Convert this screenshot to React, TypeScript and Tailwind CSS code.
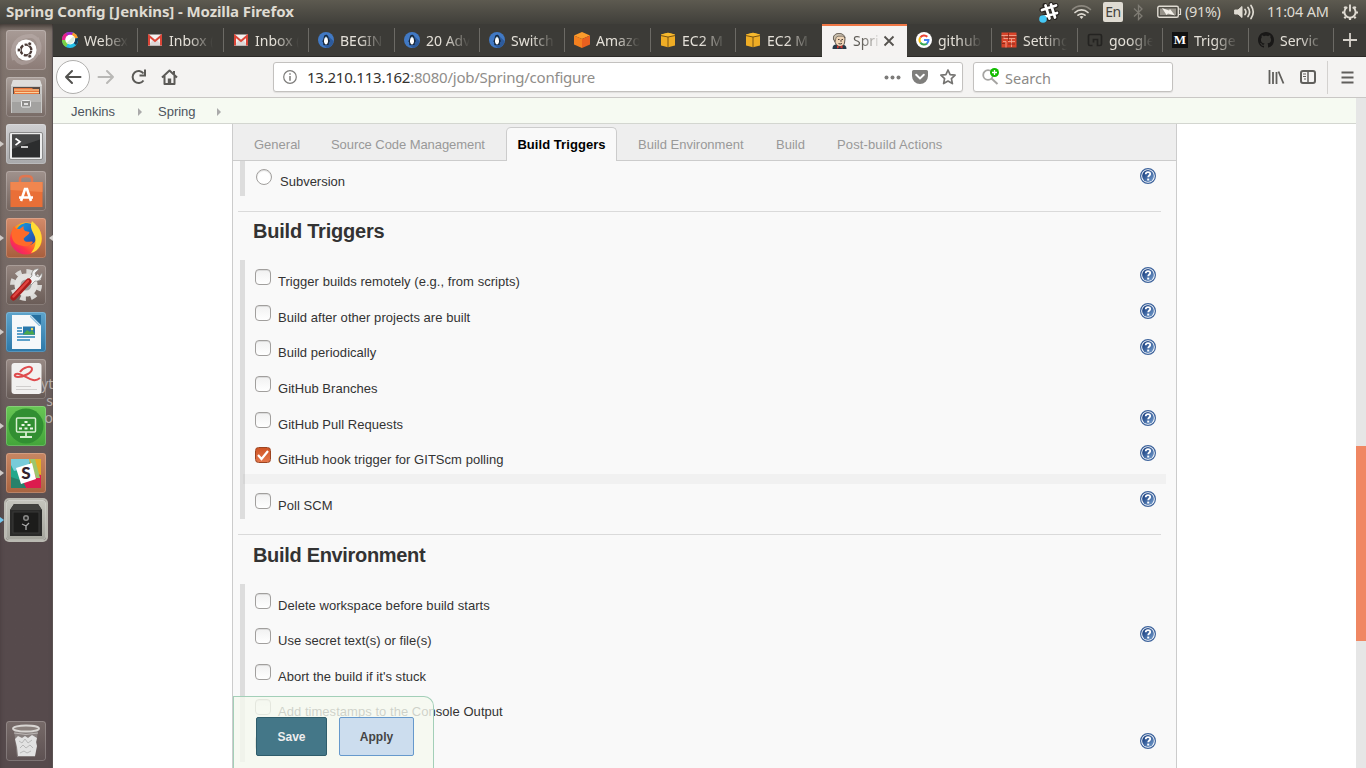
import type { ReactNode } from "react";

const ui = "font-['Noto_Sans','Open_Sans',sans-serif]";

/* ---------- Favicons ---------- */

const WebexIcon = () => (
  <svg width="16" height="16" viewBox="0 0 16 16">
    <circle cx="8" cy="8" r="8" fill="#23c0e8" />
    <path d="M8 8 0 9A8 8 0 0 1 5 .6Z" fill="#e91e8c" />
    <path d="M8 8 4 1A8 8 0 0 1 13 2Z" fill="#a829c8" />
    <path d="M8 8 11 .6A8 8 0 0 1 15.8 6Z" fill="#ff9c27" />
    <path d="M8 8 15.8 6A8 8 0 0 1 14 13Z" fill="#123c5c" />
    <path d="M8 8 0 8A8 8 0 0 0 4 15Z" fill="#7bd043" />
    <circle cx="8.2" cy="7.6" r="4.9" fill="#fff" />
    <path d="M4.500 11 11.500 4.200A5 5 0 0 1 4.500 11Z" fill="#dbeedd" />
  </svg>
);

const GmailIcon = () => (
  <svg width="16" height="16" viewBox="0 0 16 16">
    <rect x="1" y="2.500" width="14" height="11" fill="#f4f1f0" />
    <path d="M1 13.500 6 8l2 1.500L10 8l5 5.500Z" fill="#ddd8d8" />
    <path d="M2 13.500V4L8 9l6-5v9.500" fill="none" stroke="#db4537" strokeWidth="2" />
  </svg>
);

const PenguinIcon = () => (
  <svg width="16" height="16" viewBox="0 0 16 16">
    <circle cx="8" cy="8" r="8" fill="#4179c4" />
    <path d="M10 4 15.500 9A8 8 0 0 1 9 16l-4-3Z" fill="#2d5b9c" />
    <path d="M8 2.800C5.500 2.800 6 6 5.200 7.500 4 9.500 4.500 10 5 10l.5 3h5l.5-3c1 0 1-1 .2-2.500C10 5.500 10.500 2.800 8 2.800Z" fill="#17273b" />
    <path d="M8 5c-1.700 0-2 3-2 4.500S7 12.500 8 12.500 10 11 10 9.500 9.700 5 8 5Z" fill="#fff" />
    <path d="M7 4.800h2L8 6.500Z" fill="#91c1dc" />
  </svg>
);

const AmazonIcon = () => (
  <svg width="16" height="16" viewBox="0 0 16 16">
    <path d="M8 0 16 3.500 8 7 0 3.500Z" fill="#fb9b2b" />
    <path d="M0 3.500 8 7v9L0 12.500Z" fill="#f4801f" />
    <path d="M16 3.500 8 7v9l8-3.500Z" fill="#e9601f" />
  </svg>
);

const Ec2Icon = () => (
  <svg width="16" height="16" viewBox="0 0 16 16">
    <path d="M1 2.500 8 .8l7 1.700v11L8 15.200 1 13.500Z" fill="#efad25" />
    <path d="M1 2.500 8 .8l7 1.700L8 5Z" fill="#f7b92d" />
    <path d="M1 3.600 8 5l7-1.400M8 5v10.200" stroke="#6b4a12" strokeWidth=".9" fill="none" />
  </svg>
);

const JenkinsIcon = () => (
  <svg width="16" height="16" viewBox="0 0 16 16">
    <path d="M1.500 16c0-3 1-4 3-4.500h7c2.500.5 4 1.500 4 4.500Z" fill="#263a49" />
    <path d="M2.500 6C2 2.500 4.500.7 8 .7s6 2 6 5.300l-.5 4c-.5 2.500-2.500 3.500-4.500 3.500S5 12 4.200 9.500Z" fill="#eed4b6" stroke="#3c3430" strokeWidth=".8" />
    <path d="M2.500 6C2 3 4 .7 7.500.5 11 .3 14 2.300 14 5l-2-1.800H7L5 4.500l-.7 4Z" fill="#c9bfae" stroke="#4b443c" strokeWidth=".6" />
    <path d="M7 6.500h1.500M10.500 6.500H12M7.500 10.500q1.500 1 3.500 0M10 7v1.800" stroke="#352d29" strokeWidth=".9" fill="none" />
    <path d="m8.500 14 3-1.800v3.600ZM8.500 14 6 12.200v3.600Z" fill="#d33833" />
  </svg>
);

const GoogleIcon = () => (
  <svg width="16" height="16" viewBox="0 0 16 16">
    <circle cx="8" cy="8" r="8" fill="#fff" />
    <g fill="none" strokeWidth="2">
      <path d="M4.300 5.500A4.500 4.500 0 0 1 11.300 4.700" stroke="#ea4335" />
      <path d="M4.300 10.500a4.500 4.500 0 0 1 0-5" stroke="#fbbc05" />
      <path d="M4.300 10.500a4.500 4.500 0 0 0 6.700 1" stroke="#34a853" />
      <path d="M8 8h4.500a4.500 4.500 0 0 1-1.700 3.600" stroke="#4285f4" />
    </g>
  </svg>
);

const SettingIcon = () => (
  <svg width="16" height="16" viewBox="0 0 16 16">
    <rect x=".5" y=".5" width="15" height="15" fill="#d9442a" />
    <path d="M.5 3.500h15M3 6.500h11M3 4v3M2 9.500h3v6M7 9.500h7M10.500 7v8" stroke="#f5b09c" strokeWidth=".8" fill="none" />
    <path d="M1 5h14M1 11.500h3M7 12h7M7.500 1v8" stroke="#7d2418" strokeWidth=".8" fill="none" />
  </svg>
);

const DarkGIcon = () => (
  <svg width="16" height="16" viewBox="0 0 16 16">
    <path d="M5.500 13.500H3a1.500 1.500 0 0 1-1.500-1.500V4A1.500 1.500 0 0 1 3 2.500h10A1.500 1.500 0 0 1 14.500 4v8a1.500 1.500 0 0 1-1.500 1.500h-2.500V7.500H6.500v3" fill="none" stroke="#242321" strokeWidth="1.700" />
  </svg>
);

const MediumIcon = () => (
  <span className="flex h-4 w-4 items-center justify-center bg-[#111] font-['Liberation_Serif',serif] text-[13px] leading-4 font-bold text-white">
    M
  </span>
);

const GithubIcon = () => (
  <svg width="16" height="16" viewBox="0 0 16 16" fill="#191817">
    <path d="M8 0C3.580 0 0 3.580 0 8c0 3.540 2.290 6.530 5.470 7.590.4.070.55-.17.55-.38 0-.19-.01-.82-.01-1.490-2.010.37-2.530-.49-2.690-.94-.09-.23-.48-.94-.82-1.130-.28-.15-.68-.52-.01-.53.63-.01 1.080.58 1.230.82.72 1.210 1.870.87 2.330.66.07-.52.28-.87.51-1.070-1.780-.2-3.640-.89-3.640-3.950 0-.87.31-1.590.82-2.150-.08-.2-.36-1.020.08-2.120 0 0 .67-.21 2.200.82.64-.18 1.320-.27 2-.27s1.360.09 2 .27c1.530-1.040 2.200-.82 2.200-.82.44 1.100.16 1.920.08 2.120.51.56.82 1.270.82 2.150 0 3.070-1.870 3.750-3.650 3.950.29.25.54.73.54 1.480 0 1.070-.01 1.930-.01 2.200 0 .21.15.46.55.38A8.010 8.010 0 0 0 16 8c0-4.420-3.580-8-8-8Z" />
  </svg>
);

type Tab = { label: string; icon: ReactNode; active?: boolean; width: string };

const tabs: Tab[] = [
  { label: "Webex", icon: <WebexIcon />, width: "w-[85px]" },
  { label: "Inbox (", icon: <GmailIcon />, width: "w-[86px]" },
  { label: "Inbox (", icon: <GmailIcon />, width: "w-[85px]" },
  { label: "BEGIN", icon: <PenguinIcon />, width: "w-[86px]" },
  { label: "20 Adv", icon: <PenguinIcon />, width: "w-[85px]" },
  { label: "Switch", icon: <PenguinIcon />, width: "w-[85px]" },
  { label: "Amazo", icon: <AmazonIcon />, width: "w-[86px]" },
  { label: "EC2 M", icon: <Ec2Icon />, width: "w-[85px]" },
  { label: "EC2 M", icon: <Ec2Icon />, width: "w-[86px]" },
  { label: "Spri", icon: <JenkinsIcon />, active: true, width: "w-[85px]" },
  { label: "github", icon: <GoogleIcon />, width: "w-[85px]" },
  { label: "Setting", icon: <SettingIcon />, width: "w-[86px]" },
  { label: "google", icon: <DarkGIcon />, width: "w-[85px]" },
  { label: "Trigge", icon: <MediumIcon />, width: "w-[86px]" },
  { label: "Servic", icon: <GithubIcon />, width: "w-[85px]" },
];

/* ---------- Top panel ---------- */

function TopPanel() {
  return (
    <header className={`flex h-6 shrink-0 items-center bg-linear-to-b from-[#5d5a50] to-[#403f3a] text-[#dfdbd2] ${ui}`}>
      <h1 className="w-[1038px] pb-0.5 pl-1.5 text-[15px] leading-[22px] font-bold tracking-[-0.1px] whitespace-nowrap">
        Spring Config [Jenkins] - Mozilla Firefox
      </h1>
      <svg width="22" height="22" viewBox="0 0 22 22" fill="none">
        <g stroke="#26221f" strokeWidth="5" strokeLinecap="round"><path d="m7 4.500 4 13M13 3.500l4 13M4 9l14-4.500M5.500 16 19 12" /></g>
        <g stroke="#fff" strokeWidth="2.700" strokeLinecap="round"><path d="m7.500 4.500 4 13M13 3.500l4 13M4 9l14-4.500M5.500 16 19 12" /></g>
        <circle cx="5" cy="18" r="3.800" fill="#45c8f5" />
      </svg>
      <svg className="ml-[11px]" width="21" height="16" viewBox="0 0 21 16" fill="none" strokeLinecap="round">
        <path d="M1.500 5.500a13 13 0 0 1 18 0" stroke="#8b877e" strokeWidth="1.600" />
        <path d="M4 8.500a9.500 9.500 0 0 1 13 0M7 11.200a5.500 5.500 0 0 1 7 0" stroke="#dfdbd2" strokeWidth="1.700" />
        <path d="m8.500 12.700 2 2.300 2-2.300q-2-1.200-4 0Z" fill="#dfdbd2" />
      </svg>
      <span className="ml-[11px] flex h-5 w-5 items-center justify-center rounded-[2px] bg-[#dfdbd2] pb-px text-[14px] leading-5 tracking-[-0.5px] text-[#45433e]">En</span>
      <svg className="ml-[10px]" width="11" height="17" viewBox="0 0 11 17" fill="none" stroke="#7f7c74" strokeWidth="1.300">
        <path d="m1 4.500 8 7.500-3.500 3.500v-14L9 5 1 12.500" />
      </svg>
      <svg className="ml-[13px]" width="25" height="14" viewBox="0 0 25 14">
        <rect x=".8" y="1.300" width="20.500" height="11" rx="1.500" fill="none" stroke="#dfdbd2" strokeWidth="1.400" />
        <path d="M22 4h1.500v5.500H22" fill="none" stroke="#dfdbd2" strokeWidth="1.200" />
        <rect x="3" y="3.500" width="16" height="6.600" fill="#969289" />
        <path d="m5 3 7 2.500 1-1.500 5 6.500-7-2-1.500 1.500Z" fill="#f3f0e9" />
      </svg>
      <span className="ml-[3px] w-[38px] pb-0.5 text-[14.5px] leading-5 tracking-[-0.35px]">(91%)</span>
      <svg className="ml-[11px]" width="21" height="16" viewBox="0 0 21 16" fill="none" stroke="#dfdbd2" strokeWidth="1.700" strokeLinecap="round">
        <path d="M1 6h3l4-3.500v11L4 10H1Z" fill="#dfdbd2" strokeWidth="1" />
        <path d="M11 5.500q1.800 2.500 0 5M14 3.500q3.200 4.500 0 9M17 1.500q4.500 6.500 0 13" />
      </svg>
      <span className="ml-[12px] w-[64px] text-[14.5px] tracking-[-0.2px] whitespace-nowrap">11:04 AM</span>
      <svg className="ml-[10px]" width="18" height="18" viewBox="0 0 18 18" fill="none" stroke="#dfdbd2">
        <path d="M6.300 4.200a5.600 5.600 0 1 0 5.400 0" strokeWidth="1.900" />
        <path d="M9 1.500v7" strokeWidth="1.900" />
        <path d="M1 9.500h2M15 9.500h2M9 15v2M3.300 3.800l1.500 1.500M14.700 3.800l-1.500 1.500M3.300 15.200l1.500-1.500M14.700 15.200l-1.500-1.500" strokeWidth="2.200" />
      </svg>
    </header>
  );
}

/* ---------- Launcher ---------- */

const UbuntuLogo = () => (
  <svg width="40" height="40" viewBox="0 0 40 40">
    <path d="M8 30C4 15 12 5 26 6c8 3 9 12 6 18M31 8c5 12-2 24-15 25C9 31 7 25 7 19" fill="none" stroke="#c6bab6" strokeWidth="4" opacity=".4" />
    <circle cx="20" cy="20" r="10.500" fill="#fff" />
    <circle cx="20" cy="20" r="5.300" fill="none" stroke="#4a3a36" strokeWidth="2.300" strokeDasharray="9.600 1.500" strokeDashoffset="-.7" />
    <g fill="#4a3a36" stroke="#fff" strokeWidth=".7"><circle cx="13" cy="20" r="1.900" /><circle cx="23.700" cy="13.800" r="1.900" /><circle cx="23.700" cy="26.200" r="1.900" /></g>
  </svg>
);

const FilesLogo = () => (
  <svg width="40" height="40" viewBox="0 0 40 40">
    <path d="M7 3h27l2 6v27H5V9Z" fill="#c9c8c6" />
    <path d="M7 3h27l2 6H5Z" fill="#dedddb" />
    <rect x="7" y="10" width="27" height="7" fill="#594b44" />
    <path d="M8 11h18l1 1h6v5H8Z" fill="#e8763b" /><path d="M8 13h25M9 15.500h24" stroke="#f7d29b" strokeWidth="1" />
    <path d="M6 17h29v19H6Z" fill="#a3a2a0" /><path d="M6 17h29v8H6Z" fill="#b7b6b4" />
    <rect x="15.500" y="23.500" width="9" height="6.500" rx="1" fill="#8e8d8b" stroke="#eee" strokeWidth="1" />
    <path d="M18 27h4" stroke="#fff" strokeWidth="1.400" />
  </svg>
);

const TerminalLogo = () => (
  <svg width="40" height="40" viewBox="0 0 40 40">
    <rect x="3.500" y="8.500" width="33" height="27" rx="1.500" fill="#ececec" stroke="#777" strokeWidth=".8" />
    <rect x="6" y="10.500" width="28" height="23" fill="#2c2d2e" /><path d="M6 10.500h28v5L6 25Z" fill="#464748" />
    <path d="m9.500 14.500 4.500 3.300-4.500 3.300" fill="none" stroke="#fff" strokeWidth="1.700" /><path d="M15 23h7" stroke="#fff" strokeWidth="1.500" />
  </svg>
);

const SoftwareLogo = () => (
  <svg width="40" height="40" viewBox="0 0 40 40">
    <path d="M14 13V8q0-3 6-3t6 3v5" fill="none" stroke="#e07650" strokeWidth="2.500" />
    <path d="M4.500 11h32v25h-32Z" fill="#e96f37" /><path d="M4.500 11h32v10l-32-2Z" fill="#f0864f" />
    <path d="m15 30 4-12h2l4 12M13 26.500h14" fill="none" stroke="#fff" strokeWidth="2.600" />
  </svg>
);

const FirefoxLogo = () => (
  <svg width="40" height="40" viewBox="0 0 40 40">
    <defs>
      <linearGradient id="fx" x1=".9" y1="0" x2=".1" y2="1"><stop offset="0" stopColor="#ffe93c" /><stop offset=".4" stopColor="#ff9a16" /><stop offset=".72" stopColor="#ff3647" /><stop offset="1" stopColor="#e31587" /></linearGradient>
      <linearGradient id="fb" x1="0" y1="0" x2="1" y2="1"><stop offset="0" stopColor="#12a0e4" /><stop offset="1" stopColor="#2d3fa5" /></linearGradient>
    </defs>
    <circle cx="20" cy="20.500" r="16" fill="url(#fx)" />
    <path d="M11 11C14 5 22 3 27 7c4 4 5 10 3 15-2 4-6 6-10 5-4 0-6-2-7-5l5-2 5-5-4-1-3-3Z" fill="url(#fb)" />
    <path d="M8 8q2 3.500 5 3.500L17.500 8q-.5 3.500 1.500 5l4.500 1q-.5 3-5 4.500-2 3 1 5c3 1 5-1 7.500.5-2 4-6 5-10 4C11 27 7 25 6 19 5 15 6 11 8 8Z" fill="#ff6a2a" />
    <path d="M26 3c3 3 7 6 8 10 4 12-1 20-9 22 5-6 5-11 4-16-2-6-6-9-3-16Z" fill="#ffdc35" />
  </svg>
);

const SettingsLogo = () => (
  <svg width="40" height="40" viewBox="0 0 40 40">
    <circle cx="20" cy="20" r="13.500" fill="none" stroke="#dad9d7" strokeWidth="5" strokeDasharray="5.600 5" />
    <circle cx="20" cy="20" r="8.500" fill="#a3a19f" stroke="#e3e2e0" strokeWidth="6" />
    <path d="m22 15 4-4c-1-5 3-8 7-7l-4 4 1 3 3 1 3-4c1 5-3 9-7 8l-4 4Z" fill="#f2f2f2" stroke="#8b8987" strokeWidth=".7" />
    <path d="m7.500 32.500 15-16" stroke="#a81d1c" strokeWidth="6" strokeLinecap="round" /><path d="m7.500 31.500 14.500-15.500" stroke="#e04440" strokeWidth="2.500" strokeLinecap="round" />
  </svg>
);

const WriterLogo = () => (
  <svg width="40" height="40" viewBox="0 0 40 40">
    <path d="M6 3h19l10 10v24H6Z" fill="#f5f8fa" /><path d="m25 3 10 10V3Z" fill="#256f9f" /><path d="m24 3 11 11h-2L24 5Z" fill="#8fc2df" />
    <path d="M11 16h5M11 19h5M11 22h18M11 25h18M11 28h13" stroke="#2a82b9" strokeWidth="1.500" />
    <rect x="17" y="14.500" width="12" height="8" fill="#2678ac" /><path d="m17 22.500 4-4.500 3 2 2-2 3 4.500Z" fill="#49a84c" /><circle cx="26" cy="17" r="1.200" fill="#f3da55" />
  </svg>
);

const PdfLogo = () => (
  <svg width="40" height="40" viewBox="0 0 40 40">
    <rect x="5.500" y="4" width="30" height="31" rx="3" fill="#f2f1f0" />
    <path d="M14 13c3-5 12-7 12-3s-9 8-14 8c-5 0-4-4 1-3 8 2 14 10 21 4" fill="none" stroke="#df4b4d" strokeWidth="2" />
    <path d="M10 27.500h15M10 30.500h21" stroke="#d0cecd" strokeWidth="1" />
  </svg>
);

const ScreenLogo = () => (
  <svg width="40" height="40" viewBox="0 0 40 40">
    <circle cx="20" cy="20" r="17.500" fill="#318f32" />
    <rect x="10.500" y="12" width="19" height="14" rx="1" fill="none" stroke="#d9f0d3" strokeWidth="1.500" />
    <path d="M20 26v4M14 31h12" stroke="#d9f0d3" strokeWidth="1.800" />
    <path d="M18.500 15h3v2h-3ZM15.500 18h3v2h-3ZM21.500 18h3v2h-3ZM13 21.500h3v2h-3ZM18.500 21.500h3v2h-3ZM24 21.500h3v2h-3Z" fill="#eaf8e5" />
  </svg>
);

const SlackLogo = () => (
  <span className="relative flex h-10 w-10 items-center justify-center font-['Lato',sans-serif] text-[17px] font-black text-[#33222d]">
    <svg className="absolute inset-0" width="40" height="40" viewBox="0 0 40 40">
      <rect x="5" y="6" width="30" height="29" fill="#22a88c" />
      <path d="M5 6h20l-4 9L8 18 5 12Z" fill="#78cbd9" /><path d="M23 6h12v16l-8 1Z" fill="#e5ad25" />
      <path d="m27 20 8 2v13H20l-6-7Z" fill="#dc1c4e" /><path d="m5 24 12 4 3 7H5Z" fill="#27826b" /><path d="M24 6h5l5 19h-4Z" fill="#9dc66b" />
      <path d="m10 15 16-5 4 16-15 5Z" fill="#fff" />
    </svg>
    <span className="relative">S</span>
  </span>
);

const SafeLogo = () => (
  <svg width="40" height="40" viewBox="0 0 40 40">
    <path d="M8 4h24l4 6v26H4V10Z" fill="#2a2a29" /><path d="M8 4h24l4 6H4Z" fill="#42423f" />
    <rect x="7" y="12" width="26" height="21" fill="#1c1c1b" stroke="#393938" />
    <circle cx="20" cy="18" r="3" fill="#8a8a88" /><circle cx="20" cy="18" r="1.500" fill="#292928" />
    <path d="m16 24 4 2 3-3M20 26v4" stroke="#aaa" strokeWidth="1.300" fill="none" />
  </svg>
);

const TrashLogo = () => (
  <svg width="40" height="40" viewBox="0 0 40 40">
    <path d="M8 8h24l-3 28H11Z" fill="#9a9592" opacity=".6" />
    <path d="m9 18 3-3 4 2 3-2 3 2 4-3 5 3-1 4 1 4-2 10H12l-1-9Z" fill="#e2e2e2" />
    <path d="m13 20 3 2 3-4 3 4 4-3M14 27l3-3 3 3 4-3 3 3M14 32l4-2 3 2 4-2" stroke="#b8b8b8" strokeWidth="1" fill="none" />
    <ellipse cx="20" cy="7.500" rx="13" ry="3" fill="#8a807c" stroke="#d8d5d2" strokeWidth="1.800" /><path d="M8 12q12 3 24 0" stroke="#bdb8b5" fill="none" />
  </svg>
);

const launcher: { icon: ReactNode; tile: string; left?: string; right?: boolean }[] = [
  { icon: <UbuntuLogo />, tile: "from-[#a89b96] to-[#8c7c77]" },
  { icon: <FilesLogo />, tile: "from-[#aaa09b] to-[#786b66]" },
  { icon: <TerminalLogo />, tile: "from-[#cfcfd1] to-[#a8a8aa]", left: "border-l-[#cfcac7]" },
  { icon: <SoftwareLogo />, tile: "from-[#a0928d] to-[#74655f]" },
  { icon: <FirefoxLogo />, tile: "from-[#d38b6a] to-[#a85e3c]", left: "border-l-[#cfcac7]", right: true },
  { icon: <SettingsLogo />, tile: "from-[#94857f] to-[#6a5c57]" },
  { icon: <WriterLogo />, tile: "from-[#5da4cc] to-[#2c78a8]", left: "border-l-[#cfcac7]" },
  { icon: <PdfLogo />, tile: "from-[#988a85] to-[#655955]" },
  { icon: <ScreenLogo />, tile: "from-[#68c655] to-[#43a53a]", left: "border-l-[#cfcac7]" },
  { icon: <SlackLogo />, tile: "from-[#c88663] to-[#a96440]", left: "border-l-[#cfcac7]" },
  { icon: <SafeLogo />, tile: "from-[#c5c5bd] to-[#a4a49c] ring-2 ring-[#d3d4ca]/80", left: "border-l-[#74c7ee]" },
];

function Tile({ icon, tile }: { icon: ReactNode; tile: string }) {
  return (
    <div className={`h-10 w-10 overflow-hidden rounded-[3px] bg-linear-to-b ${tile}`}>
      <div className="h-10 w-10 rounded-[3px] border border-white/20 *:-m-px">{icon}</div>
    </div>
  );
}

function Launcher() {
  return (
    <nav className="relative flex w-[53px] shrink-0 flex-col overflow-hidden bg-linear-to-b from-[#82766f] via-[#706461] via-45% to-[#564a4c] to-70% pt-1.5 shadow-[inset_0_5px_6px_-3px_rgba(30,25,22,0.8),inset_-1px_0_0_#655b5c]">
      {launcher.map((item, i) => (
        <div key={i} className="flex h-[47px] shrink-0 items-start">
          <span className="flex h-10 w-1.5 items-center">
            {item.left && <i className={`h-0 w-0 border-y-[3px] border-l-4 border-y-transparent ${item.left}`} />}
          </span>
          <Tile icon={item.icon} tile={item.tile} />
          {item.right && (
            <span className="flex h-10 w-[7px] items-center justify-end">
              <i className="h-0 w-0 border-y-[3px] border-r-4 border-y-transparent border-r-[#d8d4d1]" />
            </span>
          )}
        </div>
      ))}
      <div className="mt-auto mb-[7px] pl-1.5">
        <Tile icon={<TrashLogo />} tile="from-[#776b69] to-[#5d5152]" />
      </div>
      <div className={`absolute top-[351px] left-[41px] w-[12px] overflow-hidden text-right text-[14px] leading-[17px] text-[#b5afac] ${ui}`}>
        yt<br />s<br />o
      </div>
    </nav>
  );
}

/* ---------- Browser chrome ---------- */

function TabStrip() {
  return (
    <div className={`flex h-[33px] shrink-0 bg-[#3c3b37] text-[14px] text-[#e4e0d8] ${ui}`}>
      {tabs.map((t, i) =>
        t.active ? (
          <div key={i} className={`flex h-full items-center border-t-2 border-[#f07746] bg-[#f5f3f2] pb-0.5 pl-[9px] text-[#5e5b56] ${t.width}`}>
            <span className="h-4 w-4">{t.icon}</span>
            <span className="ml-1.5 w-[28px] mask-r-from-30% whitespace-nowrap">{t.label}</span>
            <svg className="ml-px" width="14" height="14" viewBox="0 0 14 14" stroke="#55524e" strokeWidth="1.800"><path d="m2.500 2.500 9 9m0-9-9 9" /></svg>
          </div>
        ) : (
          <div key={i} className={`flex h-full items-center border-b border-[#2c2a27] pl-[9px] ${t.width}`}>
            <span className="h-4 w-4">{t.icon}</span>
            <span className="ml-1.5 w-[44px] mask-r-from-45% whitespace-nowrap">{t.label}</span>
            <span className={`ml-auto h-6 w-px ${tabs[i + 1]?.active ? "" : "bg-[#6c6a65]"}`} />
          </div>
        ),
      )}
      <div className="flex flex-1 items-center justify-center border-b border-[#2c2a27]">
        <svg width="14" height="14" viewBox="0 0 14 14" stroke="#d6d2cb" strokeWidth="1.800"><path d="M7 0v14M0 7h14" /></svg>
      </div>
    </div>
  );
}

function NavBar() {
  return (
    <div className={`flex h-[41px] shrink-0 items-center border-b border-[#c9c7c5] bg-[#f4f3f2] ${ui}`}>
      <span className="ml-[3px] flex h-[34px] w-[34px] items-center justify-center rounded-full border border-[#b0afad] bg-white">
        <svg width="18" height="16" viewBox="0 0 18 16" fill="none" stroke="#53524f" strokeWidth="2" strokeLinecap="round" strokeLinejoin="round"><path d="M16.500 8H2m6-6L2 8l6 6" /></svg>
      </span>
      <svg className="ml-[7px]" width="18" height="16" viewBox="0 0 18 16" fill="none" stroke="#b9b8b6" strokeWidth="2" strokeLinecap="round" strokeLinejoin="round"><path d="M1.500 8H16m-6-6 6 6-6 6" /></svg>
      <svg className="ml-[15px]" width="17" height="16" viewBox="0 0 17 16" fill="none" stroke="#5b5a57" strokeWidth="2"><path d="M13.500 11.500a6 6 0 1 1 0-7" /><path d="M15 .5v6H9.500" /></svg>
      <svg className="ml-[14px]" width="17" height="16" viewBox="0 0 17 16" fill="none" stroke="#5b5a57" strokeWidth="2" strokeLinejoin="round"><path d="m1 8.500 7.500-7 7.500 7M3.500 7v8h10V7" /><path d="M8.500 15V9.500" strokeWidth="3.400" /><path d="M13 2v3" /></svg>

      <div className="ml-[95px] flex h-[30px] w-[690px] items-center rounded-[3px] border border-[#c3c1bf] bg-white shadow-[0_1px_1px_rgba(0,0,0,0.08)]">
        <svg className="ml-[9px]" width="14" height="14" viewBox="0 0 14 14" fill="none" stroke="#7d7c7a"><circle cx="7" cy="7" r="6.300" strokeWidth="1.200" /><path d="M7 3.200v1.500M7 6v4.700" strokeWidth="1.500" /></svg>
        <span className="ml-2.5 text-[15px] leading-5 tracking-[-0.23px] whitespace-nowrap text-[#34322f]">
          13.210.113.162<span className="text-[#8f8d8a]">:8080/job/Spring/configure</span>
        </span>
        <svg className="ml-auto" width="17" height="5" viewBox="0 0 17 5" fill="#7c7b79"><circle cx="2.500" cy="2.500" r="2" /><circle cx="8.500" cy="2.500" r="2" /><circle cx="14.500" cy="2.500" r="2" /></svg>
        <svg className="ml-[11px]" width="16" height="14" viewBox="0 0 16 14"><path d="M1.500 0h13A1.500 1.500 0 0 1 16 1.500V6A8 8 0 0 1 0 6V1.500A1.500 1.500 0 0 1 1.500 0Z" fill="#7f7e7c" /><path d="m4.200 4.800 3.800 3.600 3.800-3.600" fill="none" stroke="#fff" strokeWidth="2" strokeLinecap="round" /></svg>
        <svg className="mr-[6px] ml-3" width="16" height="16" viewBox="0 0 16 16" fill="none" stroke="#757472" strokeWidth="1.700" strokeLinejoin="round"><path d="m8 1 2.100 4.600 5 .6-3.700 3.400 1 5L8 12.100l-4.400 2.500 1-5L.9 6.200l5-.6Z" /></svg>
      </div>

      <div className="ml-[10px] flex h-[30px] w-[200px] items-center rounded-[3px] border border-[#c3c1bf] bg-white shadow-[0_1px_1px_rgba(0,0,0,0.08)]">
        <svg className="ml-2" width="18" height="18" viewBox="0 0 18 18" fill="none"><circle cx="6" cy="7" r="4.800" stroke="#a5a4a2" strokeWidth="1.800" /><path d="m9.500 10.500 6 5.500" stroke="#a5a4a2" strokeWidth="2" /><circle cx="12.500" cy="4.500" r="4.500" fill="#12bc00" /><path d="M12.500 2v5M10 4.500h5" stroke="#fff" strokeWidth="1.300" /></svg>
        <span className="ml-[5px] pt-0.5 text-[14.5px] leading-5 text-[#8c8a87]">Search</span>
      </div>

      <svg className="ml-[95px]" width="17" height="14" viewBox="0 0 17 14" stroke="#605f5c" strokeWidth="1.800"><path d="M1.500 0v14M5 2v12M8.500 2v12M10.500 1.500 15.500 13.500" /></svg>
      <svg className="ml-[15px]" width="16" height="14" viewBox="0 0 16 14" fill="none" stroke="#605f5c"><rect x="1" y="1" width="14" height="12" rx="2" strokeWidth="2" /><path d="M8 1v12" strokeWidth="1.500" /><path d="M3 4h3M3 6.500h3M4 9h2" /></svg>
      <span className="ml-[11px] h-[33px] w-px bg-[#d3d1cf]" />
      <svg className="ml-[13px]" width="13" height="13" viewBox="0 0 13 13" stroke="#605f5c" strokeWidth="2"><path d="M.5 1.500h12M.5 6.500h12M.5 11.500h12" /></svg>
    </div>
  );
}

/* ---------- Jenkins page ---------- */

const Caret = ({ className }: { className: string }) => (
  <i className={`h-0 w-0 border-y-4 border-l-4 border-y-transparent border-l-[#aaaaaa] ${className}`} />
);

const Help = ({ className = "" }: { className?: string }) => (
  <svg className={`shrink-0 ${className}`} width="16" height="16" viewBox="0 0 16 16">
    <defs><linearGradient id="help" x1="0" y1="0" x2="1" y2="1"><stop offset=".2" stopColor="#1f4686" /><stop offset="1" stopColor="#7ba3d2" /></linearGradient></defs>
    <circle cx="8" cy="8" r="7.400" fill="#fff" stroke="#3d639c" strokeWidth="1.200" />
    <circle cx="8" cy="8" r="5.900" fill="url(#help)" />
    <path d="M5.700 6.200C5.800 3.300 10.300 3.500 10.200 6c0 1.500-2 1.600-2 3.300" fill="none" stroke="#fff" strokeWidth="1.800" /><path d="M7.200 10.600h2v1.900h-2Z" fill="#fff" />
  </svg>
);

function Checkbox({ checked }: { checked?: boolean }) {
  return checked ? (
    <span className="h-4 w-4 shrink-0 rounded-[3.5px] border border-[#9c4420] bg-linear-to-b from-[#cf5424] to-[#e4764a]">
      <svg width="14" height="14" viewBox="0 0 14 14" fill="none" stroke="#fff" strokeWidth="2.200"><path d="m2 7 3.500 4L12 3" /></svg>
    </span>
  ) : (
    <span className="h-4 w-4 shrink-0 rounded-[4px] border border-[#a19f9d] bg-linear-to-b from-[#f1f1f1] to-white shadow-[inset_0_1px_0_#dcdcdc]" />
  );
}

type Option = { label?: string; height: string; help?: string; checked?: boolean; strip?: boolean };

const triggers: Option[] = [
  { label: "Trigger builds remotely (e.g., from scripts)", height: "h-9", help: "-mt-0.5" },
  { label: "Build after other projects are built", height: "h-[35px]", help: "-mt-0.5" },
  { label: "Build periodically", height: "h-9", help: "-mt-px" },
  { label: "GitHub Branches", height: "h-9" },
  { label: "GitHub Pull Requests", height: "h-[35px]", help: "-mt-0.5" },
  { label: "GitHub hook trigger for GITScm polling", height: "h-[46px]", help: "-mt-0.5", checked: true, strip: true },
  { label: "Poll SCM", height: "h-[35px]", help: "-mt-0.5" },
];

const environment: Option[] = [
  { label: "Delete workspace before build starts", height: "h-[35px]" },
  { label: "Use secret text(s) or file(s)", height: "h-9", help: "-mt-0.5" },
  { label: "Abort the build if it's stuck", height: "h-[35px]" },
  { label: "Add timestamps to the Console Output", height: "h-9" },
  { height: "h-9", help: "-mt-0.5" },
];

function Section({ title, options, heading }: { title: string; options: Option[]; heading: string }) {
  return (
    <section className="ml-[5px]">
      <h2 className={`mr-[15px] border-t border-[#dadada] pl-[15px] text-[20px] leading-[25px] font-bold text-[#333] ${heading}`}>{title}</h2>
      <div className="ml-[2px] border-l-[5px] border-[#dddddd]">
        {options.map((o, i) => (
          <div key={i} className={`flex flex-col justify-between ${o.height}`}>
            <div className="flex items-start pt-[9px] pl-2.5">
              <Checkbox checked={o.checked} />
              {o.label && <label className="mt-[5px] ml-[7px] text-[13px] leading-[15px] tracking-[0.04px] text-[#333]">{o.label}</label>}
              {o.help && <Help className={`mr-5 ml-auto ${o.help}`} />}
            </div>
            {o.strip && <div className="mr-2.5 -ml-0.5 h-2.5 bg-black/[0.03]" />}
          </div>
        ))}
      </div>
    </section>
  );
}

const pageTab = "flex h-full items-center pt-1 text-[13px] whitespace-nowrap text-[#999]";

function Jenkins() {
  return (
    <div className="flex min-h-0 flex-1 font-['Liberation_Sans',sans-serif]">
      <div className="flex min-w-0 flex-1 flex-col bg-white">
        <div className="flex h-[26px] shrink-0 items-center border-b border-[#d3d6d0] bg-[#f6faf2] pt-0.5 text-[13px] text-[#4d545d]">
          <span className="ml-[18px] w-[46px]">Jenkins</span>
          <Caret className="ml-[21px]" />
          <span className="ml-4 w-[38px]">Spring</span>
          <Caret className="ml-[21px]" />
        </div>
        <main className="relative ml-[179px] flex min-h-0 w-[945px] flex-1 flex-col overflow-hidden border-x border-[#cccccc] bg-[#f9f9f9]">
          <div className="flex h-[37px] shrink-0 bg-[#eeeeee] shadow-[inset_0_-1px_0_#cccccc]">
            <span className={`ml-[21px] w-[77px] ${pageTab}`}>General</span>
            <span className={`w-[175px] tracking-[-0.07px] ${pageTab}`}>Source Code Management</span>
            <span className="mt-[3px] flex h-[34px] w-[111px] items-center justify-center rounded-t-[5px] border border-b-0 border-[#cccccc] bg-[#f9f9f9] text-[13px] font-bold tracking-[0.06px] whitespace-nowrap text-black">
              Build Triggers
            </span>
            <span className={`ml-[21px] w-[138px] ${pageTab}`}>Build Environment</span>
            <span className={`w-[61px] ${pageTab}`}>Build</span>
            <span className={`tracking-[0.12px] ${pageTab}`}>Post-build Actions</span>
          </div>
          <div className="ml-[7px] flex h-[35px] shrink-0 items-start border-l-[5px] border-[#dddddd] pl-[11px]">
            <span className="mt-2 h-4 w-4 rounded-full border border-[#a19f9d] bg-white shadow-[inset_0_1px_1px_#ddd]" />
            <span className="mt-[13px] ml-2 text-[13px] leading-[15px] text-[#333]">Subversion</span>
            <Help className="mt-[7px] mr-5 ml-auto" />
          </div>
          <div className="h-[15px] shrink-0" />
          <Section title="Build Triggers" options={triggers} heading="h-[49px] pt-[7px] tracking-[-0.22px]" />
          <div className="h-[15px] shrink-0" />
          <Section title="Build Environment" options={environment} heading="h-[50px] pt-2 tracking-[-0.32px]" />
          <div className="absolute bottom-0 left-0 flex h-[72px] w-[201px] rounded-tr-[10px] border-t border-r border-l border-[#a3cfb8] bg-[#f5f9ef]/80 pt-5 pl-[22px] text-[12px] font-bold">
            <button className="h-[39px] w-[71px] rounded-[2px] border border-[#2f5d6b] bg-[#447788] text-[#eeeeee]">Save</button>
            <button className="ml-3 h-[39px] w-[75px] rounded-[2px] border border-[#6699cc] bg-[#ccddee] text-[#444444]">Apply</button>
          </div>
        </main>
      </div>
      <div className="w-2.5 shrink-0 bg-[#e6e6e6] pt-[348px]">
        <div className="h-[195px] bg-[#f08763]" />
      </div>
    </div>
  );
}

export default function App() {
  return (
    <div className="flex h-[768px] w-[1366px] flex-col overflow-hidden bg-white">
      <TopPanel />
      <div className="flex min-h-0 flex-1">
        <Launcher />
        <div className="flex min-w-0 flex-1 flex-col">
          <TabStrip />
          <NavBar />
          <Jenkins />
        </div>
      </div>
    </div>
  );
}
